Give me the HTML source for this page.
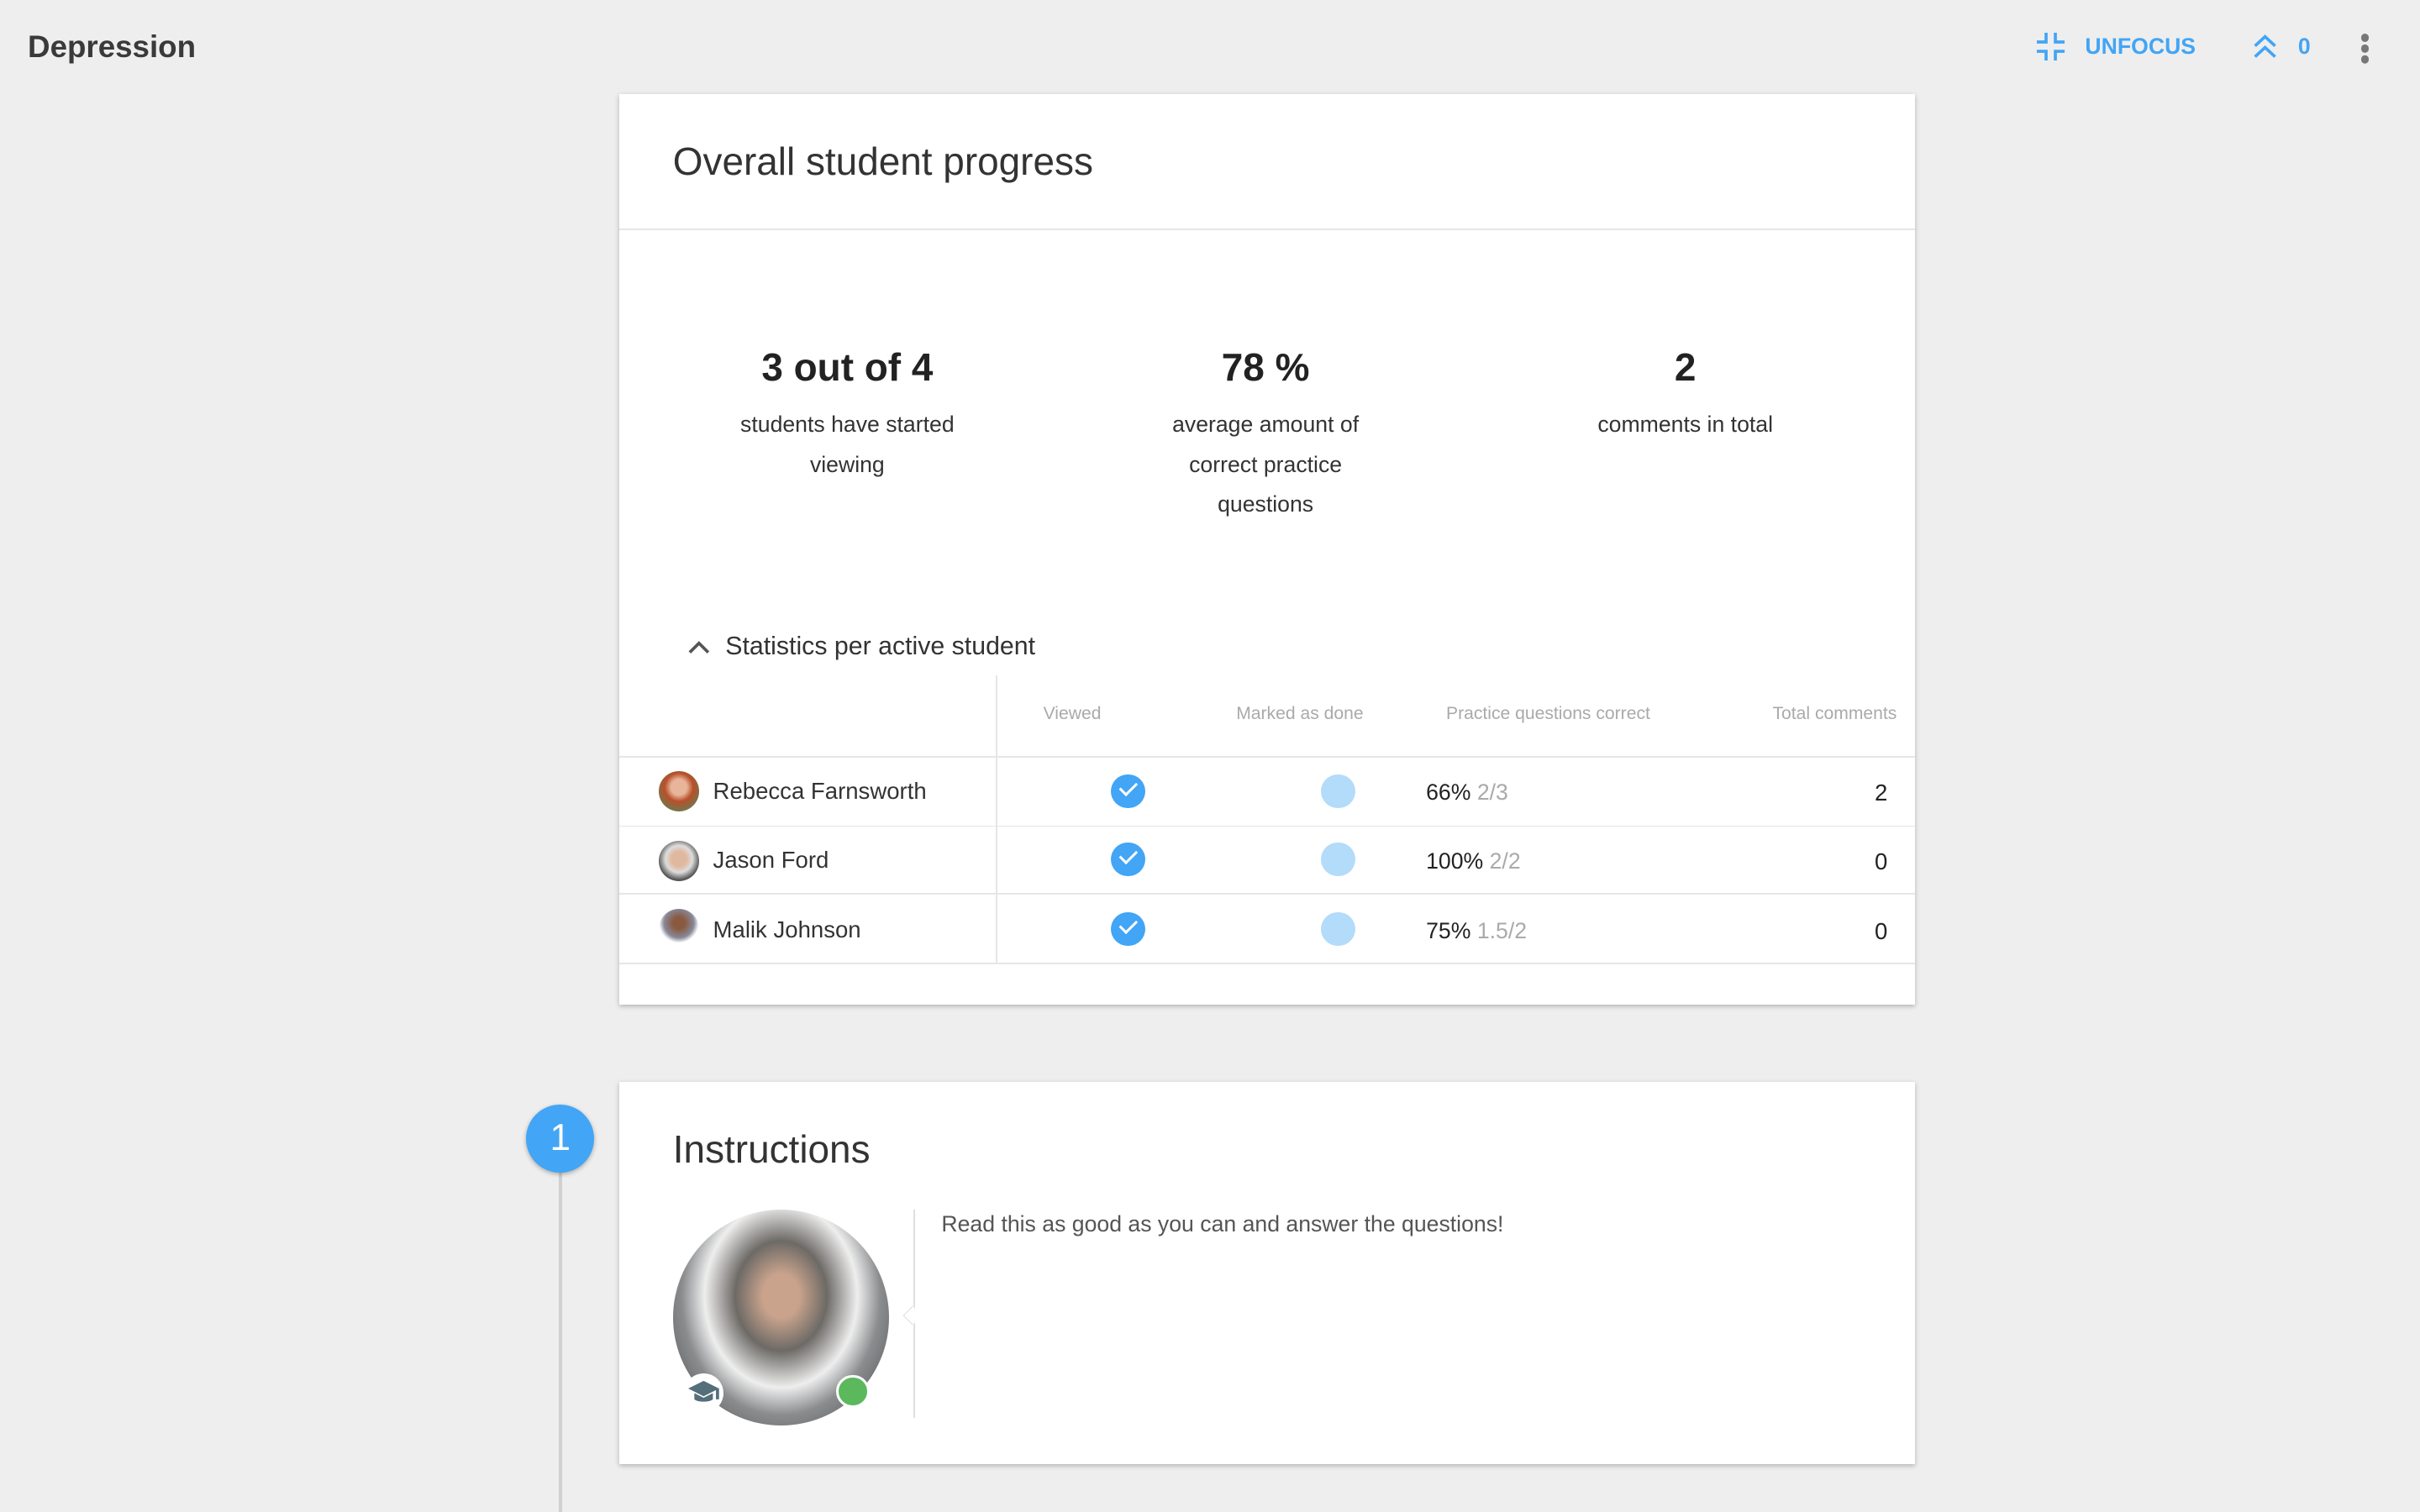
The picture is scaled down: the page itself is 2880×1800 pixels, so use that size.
<!DOCTYPE html>
<html><head><meta charset="utf-8"><style>
html{zoom:1.836735}
body{margin:0;width:1568px;height:980px;background:#eeeeee;font-family:"Liberation Sans",sans-serif;color:#333;position:relative;overflow:hidden}
.a{position:absolute}
.card{position:absolute;background:#fff;box-shadow:0 1px 3px rgba(0,0,0,.25)}
.c{text-align:center;width:240px;margin-left:-120px}
.hl{position:absolute;left:0;width:840px;height:1px;background:#e6e6e6}
.th{font-size:11.5px;color:#aaa}
.nm{font-size:15px;left:61px}
.av{left:26px;width:26px;height:26px;border-radius:50%}
.ck{width:22px;height:22px;border-radius:50%;background:#42a5f5;left:319px}
.dt{width:22px;height:22px;border-radius:50%;background:#b3dbfa;left:455px}
.pc{left:523px;font-size:14.5px;color:#222}
.pc span{color:#aaa}
.tc{right:18px;font-size:15px;color:#222}
.ck::after{content:"";position:absolute;left:6px;top:5px;width:9px;height:5px;border-left:2px solid #fff;border-bottom:2px solid #fff;transform:rotate(-45deg)}
</style></head><body>
<div class="a" style="left:18px;top:19px;font-size:20px;font-weight:bold;color:#3a3a3a">Depression</div>
<svg class="a" style="left:1320px;top:21px" width="18" height="18" viewBox="0 0 18 18" fill="#42a5f5"><path d="M5 0h2v7H0V5h5zM11 0h2v5h5v2h-7zM0 11h7v7H5v-5H0zM11 11h7v2h-5v5h-2z"/></svg>
<div class="a" style="left:1351px;top:22px;font-size:14.5px;font-weight:bold;color:#42a5f5">UNFOCUS</div>
<svg class="a" style="left:1459px;top:22px" width="17" height="16" viewBox="0 0 17 16" fill="none" stroke="#42a5f5" stroke-width="2"><path d="M2 8l6.5-6 6.5 6M2 15l6.5-6 6.5 6"/></svg>
<div class="a" style="left:1489px;top:22px;font-size:14.5px;font-weight:bold;color:#42a5f5">0</div>
<div class="a" style="left:1530px;top:22px;width:5px;height:5px;border-radius:50%;background:#777;box-shadow:0 7px 0 #777,0 14px 0 #777"></div>

<div class="card" style="left:401px;top:61px;width:840px;height:590px">
 <div class="a" style="left:35px;top:29px;font-size:25px;color:#333">Overall student progress</div>
 <div class="hl" style="top:87px"></div>
 <div class="a c" style="left:148px;top:162px"><div style="font-size:25px;font-weight:bold;color:#222">3 out of 4</div><div style="font-size:14.5px;line-height:26px;margin-top:10px;padding:0 36px">students have started viewing</div></div>
 <div class="a c" style="left:419px;top:162px"><div style="font-size:25px;font-weight:bold;color:#222">78 %</div><div style="font-size:14.5px;line-height:26px;margin-top:10px;padding:0 55px">average amount of correct practice questions</div></div>
 <div class="a c" style="left:691px;top:162px"><div style="font-size:25px;font-weight:bold;color:#222">2</div><div style="font-size:14.5px;line-height:26px;margin-top:10px">comments in total</div></div>
 <svg class="a" style="left:45px;top:354px" width="14" height="10" viewBox="0 0 14 10" fill="none" stroke="#555" stroke-width="2"><path d="M1 8l6-6 6 6"/></svg>
 <div class="a" style="left:69px;top:349px;font-size:16.5px;color:#333">Statistics per active student</div>
 <div class="a" style="left:244px;top:377px;width:1px;height:186px;background:#e6e6e6"></div>
 <div class="a th" style="left:275px;top:395px">Viewed</div>
 <div class="a th" style="left:400px;top:395px">Marked as done</div>
 <div class="a th" style="left:536px;top:395px">Practice questions correct</div>
 <div class="a th" style="right:12px;top:395px">Total comments</div>
 <div class="hl" style="top:429px"></div><div class="hl" style="top:474px"></div><div class="hl" style="top:518px"></div><div class="hl" style="top:563px"></div>
 <div class="a av" style="top:439px;background:radial-gradient(circle at 50% 40%,#e8b59a 25%,#b8502a 45%,#6b7a50 80%)"></div>
 <div class="a nm" style="top:443px">Rebecca Farnsworth</div>
 <div class="a ck" style="top:441px"></div><div class="a dt" style="top:441px"></div>
 <div class="a pc" style="top:444px">66% <span>2/3</span></div><div class="a tc" style="top:444px">2</div>
 <div class="a av" style="top:484px;background:radial-gradient(circle at 50% 45%,#e0b8a0 25%,#ddd 45%,#555 70%)"></div>
 <div class="a nm" style="top:488px">Jason Ford</div>
 <div class="a ck" style="top:485px"></div><div class="a dt" style="top:485px"></div>
 <div class="a pc" style="top:489px">100% <span>2/2</span></div><div class="a tc" style="top:489px">0</div>
 <div class="a av" style="top:528px;background:radial-gradient(circle at 50% 35%,#8a5a40 18%,#889 45%,#fff 60%)"></div>
 <div class="a nm" style="top:533px">Malik Johnson</div>
 <div class="a ck" style="top:530px"></div><div class="a dt" style="top:530px"></div>
 <div class="a pc" style="top:534px">75% <span>1.5/2</span></div><div class="a tc" style="top:534px">0</div>
</div>

<div class="a" style="left:362px;top:760px;width:2px;height:220px;background:#d0d0d0"></div>
<div class="a" style="left:341px;top:716px;width:44px;height:44px;border-radius:50%;background:#42a5f5;box-shadow:0 1px 3px rgba(0,0,0,.3);color:#fff;font-size:24px;text-align:center;line-height:44px">1</div>

<div class="card" style="left:401px;top:701px;width:840px;height:248px">
 <div class="a" style="left:35px;top:29px;font-size:25px;color:#333">Instructions</div>
 <div class="a" style="left:35px;top:83px;width:140px;height:140px;border-radius:50%;background:radial-gradient(ellipse at 50% 40%,#c9a38c 12%,#6d6a66 30%,#eee 50%,#8a8c8e 65%,#3e4144 100%)"></div>
 <div class="a" style="left:42px;top:189px;width:26px;height:26px;border-radius:50%;background:#fff"></div>
 <svg class="a" style="left:45px;top:193px" width="20" height="16" viewBox="0 0 20 16" fill="#546e7a"><path d="M10 1L0 6l10 5 8-4v6h2V6zM4 9v4c2 2 10 2 12 0V9l-6 3z"/></svg>
 <div class="a" style="left:141px;top:190px;width:18px;height:18px;border-radius:50%;background:#5cb85c;border:2px solid #fff"></div>
 <div class="a" style="left:191px;top:83px;width:1px;height:135px;background:#e0e0e0"></div>
 <div class="a" style="left:186px;top:147px;width:8px;height:8px;background:#fff;border-left:1px solid #ddd;border-bottom:1px solid #ddd;transform:rotate(45deg)"></div>
 <div class="a" style="left:209px;top:84px;font-size:14.5px;color:#555">Read this as good as you can and answer the questions!</div>
</div>
</body></html>
